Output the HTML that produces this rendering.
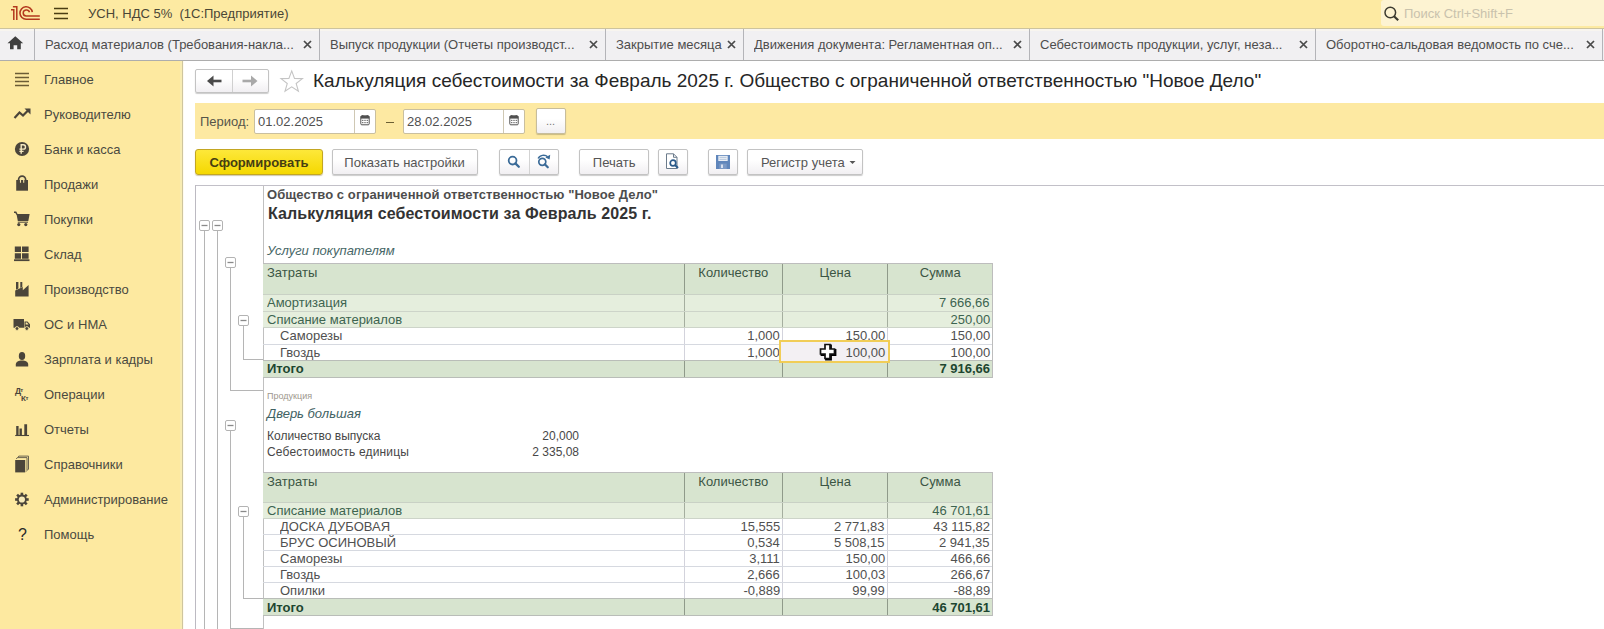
<!DOCTYPE html>
<html><head><meta charset="utf-8"><style>
*{box-sizing:border-box;margin:0;padding:0}
html,body{width:1604px;height:629px;overflow:hidden;background:#fff;font-family:"Liberation Sans",sans-serif;color:#333}
.a{position:absolute;white-space:nowrap}
.n{font-size:13.5px!important;transform:scaleX(.963);transform-origin:0 0}
.nr{font-size:13.5px!important;transform:scaleX(.963);transform-origin:100% 0}
.nc{display:inline-block;font-size:13.5px!important;transform:scaleX(.963);transform-origin:50% 0}
.nl{display:inline-block;font-size:13.5px!important;transform:scaleX(.963);transform-origin:0 0}
.tab{position:absolute;top:28px;height:32px;font-size:13px;color:#4d4d4d;line-height:32px}
.tsep{position:absolute;top:29px;width:1px;height:31px;background:#b4b4b8}
.tx{position:absolute;top:28px;height:32px}
.si{position:absolute;left:44px;font-size:13px;color:#4a4a40;line-height:16px}
.btn{position:absolute;border:1px solid #c3c3c3;border-radius:2px;background:linear-gradient(#ffffff 40%,#f1eff2);box-shadow:0 1px 1px rgba(0,0,0,.20);font-size:13px;color:#555;text-align:center}
.inp{position:absolute;border:1px solid #c1c1c1;border-radius:2px;background:#fff;font-size:13px;color:#484848}
</style></head><body>
<div class="a" style="left:0;top:0;width:1604px;height:28px;background:#fdeaa2"></div>
<div class="a" style="left:0;top:28px;width:1604px;height:1px;background:#cdc49e"></div>
<svg class="a" style="left:0;top:0" width="50" height="28" viewBox="0 0 50 28">
<g fill="none" stroke="#b3391e" stroke-width="1.5">
<path d="M11 9.7 H13.8 V19.9 M12.9 6.75 H16.8 V19.9"/>
<path d="M32.3 12.2 A6.2 6.2 0 1 0 26.2 19.2 H39.8" stroke-width="1.6"/>
<path d="M29.5 12.2 A3.2 3.1 0 1 0 26.2 16.1 H39.8" stroke-width="1.5"/>
</g></svg>
<svg class="a" style="left:53px;top:6px" width="17" height="15" viewBox="0 0 17 15">
<g stroke="#4a3d12" stroke-width="1.4"><path d="M1 2.5H15M1 7.5H15M1 12.5H15"/></g></svg>
<div class="a n" style="left:88px;top:6px;font-size:13px;line-height:15px;color:#4a4636;white-space:pre">УСН, НДС 5%  (1С:Предприятие)</div>
<div class="a" style="left:1381px;top:0;width:223px;height:26px;background:#fdf3d2;border-radius:3px 0 0 3px"></div>
<svg class="a" style="left:1383px;top:6px" width="18" height="16" viewBox="0 0 18 16">
<circle cx="7.3" cy="6.5" r="5.3" fill="none" stroke="#3c3a30" stroke-width="1.5"/><path d="M11 10.2 L15.2 14.2" stroke="#3c3a30" stroke-width="2.2"/></svg>
<div class="a n" style="left:1404px;top:6px;font-size:13px;line-height:15px;color:#c9c2ad">Поиск Ctrl+Shift+F</div>
<div class="a" style="left:0;top:29px;width:1604px;height:31px;background:#f1f0f2"></div>
<div class="a" style="left:0;top:29px;width:1604px;height:2px;background:#f8f5ef"></div>
<div class="a" style="left:0;top:60px;width:1604px;height:1px;background:#adadad"></div>
<svg class="a" style="left:7px;top:36px" width="17" height="14" viewBox="0 0 17 14">
<path d="M8.3 0.3 L16.2 7.3 H13.8 V13.3 H10.2 V9.2 H6.6 V13.3 H3 V7.3 H0.5 Z" fill="#3f3f3f"/></svg>
<div class="tsep" style="left:34px"></div>
<div class="tsep" style="left:319px"></div>
<div class="tsep" style="left:605px"></div>
<div class="tsep" style="left:743px"></div>
<div class="tsep" style="left:1029px"></div>
<div class="tsep" style="left:1315px"></div>
<div class="tsep" style="left:1602px"></div>
<div class="tab n" style="left:45px;top:29px">Расход материалов (Требования-накла...</div>
<svg class="a" style="left:303px;top:40px" width="9" height="9" viewBox="0 0 9 9"><path d="M1 1 L8 8 M8 1 L1 8" stroke="#4a4a4a" stroke-width="1.75"/></svg>
<div class="tab n" style="left:330px;top:29px">Выпуск продукции (Отчеты производст...</div>
<svg class="a" style="left:589px;top:40px" width="9" height="9" viewBox="0 0 9 9"><path d="M1 1 L8 8 M8 1 L1 8" stroke="#4a4a4a" stroke-width="1.75"/></svg>
<div class="tab n" style="left:616px;top:29px">Закрытие месяца</div>
<svg class="a" style="left:727px;top:40px" width="9" height="9" viewBox="0 0 9 9"><path d="M1 1 L8 8 M8 1 L1 8" stroke="#4a4a4a" stroke-width="1.75"/></svg>
<div class="tab n" style="left:754px;top:29px">Движения документа: Регламентная оп...</div>
<svg class="a" style="left:1013px;top:40px" width="9" height="9" viewBox="0 0 9 9"><path d="M1 1 L8 8 M8 1 L1 8" stroke="#4a4a4a" stroke-width="1.75"/></svg>
<div class="tab n" style="left:1040px;top:29px">Себестоимость продукции, услуг, неза...</div>
<svg class="a" style="left:1299px;top:40px" width="9" height="9" viewBox="0 0 9 9"><path d="M1 1 L8 8 M8 1 L1 8" stroke="#4a4a4a" stroke-width="1.75"/></svg>
<div class="tab n" style="left:1326px;top:29px">Оборотно-сальдовая ведомость по сче...</div>
<svg class="a" style="left:1586px;top:40px" width="9" height="9" viewBox="0 0 9 9"><path d="M1 1 L8 8 M8 1 L1 8" stroke="#4a4a4a" stroke-width="1.75"/></svg>
<div class="a" style="left:0;top:61px;width:180px;height:568px;background:#fde9a0"></div>
<div class="a" style="left:180px;top:61px;width:2px;height:568px;background:#f8ecb2"></div>
<div class="a" style="left:182px;top:61px;width:1px;height:568px;background:#cec59f"></div>
<div class="a" style="left:183px;top:61px;width:1px;height:568px;background:#fffbee"></div>
<div class="si n" style="top:71.5px">Главное</div>
<div class="si n" style="top:106.5px">Руководителю</div>
<div class="si n" style="top:141.5px">Банк и касса</div>
<div class="si n" style="top:176.5px">Продажи</div>
<div class="si n" style="top:211.5px">Покупки</div>
<div class="si n" style="top:246.5px">Склад</div>
<div class="si n" style="top:281.5px">Производство</div>
<div class="si n" style="top:316.5px">ОС и НМА</div>
<div class="si n" style="top:351.5px">Зарплата и кадры</div>
<div class="si n" style="top:386.5px">Операции</div>
<div class="si n" style="top:421.5px">Отчеты</div>
<div class="si n" style="top:456.5px">Справочники</div>
<div class="si n" style="top:491.5px">Администрирование</div>
<div class="si n" style="top:526.5px">Помощь</div>
<svg class="a" style="left:14px;top:72px" width="16" height="15"><g stroke="#6b5c35" stroke-width="1.3"><path d="M1 1.5H15M1 5.5H15M1 9.5H15M1 13.5H15"/></g></svg>
<svg class="a" style="left:13px;top:107px" width="19" height="13" viewBox="0 0 19 13"><path d="M1.5 11 L6.5 5.5 L10 8.5 L16 2.5" fill="none" stroke="#4b453a" stroke-width="2.2"/><path d="M11.5 1.5 H17.5 V7.5 Z" fill="#4b453a"/></svg>
<svg class="a" style="left:14px;top:141px" width="16" height="16" viewBox="0 0 16 16"><circle cx="8" cy="8" r="7.1" fill="#4b453a"/><path d="M7.2 12.8 V3.7 H9.3 A2.2 2.2 0 0 1 9.3 8.1 H5.4 M5.4 10.4 H9.6" fill="none" stroke="#f6e9c0" stroke-width="1.4"/></svg>
<svg class="a" style="left:15px;top:175px" width="14" height="17" viewBox="0 0 14 17"><path d="M1.2 5 H13 V15.7 H1.2 Z" fill="#4b453a"/><path d="M3.6 8 V4.6 A3.5 3.5 0 0 1 10.6 4.6 V8" fill="none" stroke="#4b453a" stroke-width="1.7"/><path d="M5.5 7.8 V5 A1.6 1.6 0 0 1 8.7 5 V7.8" fill="none" stroke="#f3e3a6" stroke-width="1.1"/></svg>
<svg class="a" style="left:13px;top:211px" width="18" height="16" viewBox="0 0 18 16"><path d="M1 1.2 H2.8 L4 3.5" fill="none" stroke="#4b453a" stroke-width="1.5"/><path d="M3.5 3 H16.6 L15.3 10 H4.8 Z" fill="#4b453a"/><path d="M4.8 11.2 H15" stroke="#4b453a" stroke-width="1"/><circle cx="5.8" cy="13.6" r="1.6" fill="#4b453a"/><circle cx="12.8" cy="13.6" r="1.6" fill="#4b453a"/></svg>
<svg class="a" style="left:14px;top:246px" width="16" height="16" viewBox="0 0 16 16"><path d="M0.8 0.5 H7 V6 H0.8 Z M8 0.5 H14.6 V6 H8 Z M0.8 7.3 H7 V12.8 H0.8 Z M8 7.3 H14.6 V12.8 H8 Z" fill="#4b453a"/><path d="M0 14.2 H15.5" stroke="#4b453a" stroke-width="1.8"/></svg>
<svg class="a" style="left:15px;top:282px" width="15" height="15" viewBox="0 0 15 15"><path d="M0.2 14.5 V8.5 L7.8 5 V8.3 L13.6 3 V14.5 Z" fill="#4b453a"/><path d="M1 0 H3.4 V6.6 L1 7.7 Z M5.3 0 H7.3 V5 L5.3 5.9 Z" fill="#4b453a"/></svg>
<svg class="a" style="left:13px;top:318px" width="18" height="13" viewBox="0 0 18 13"><path d="M0.5 1 H11 V9.8 H0.5 Z M11.5 3.5 H14.5 L17 6.3 V9.8 H11.5 Z" fill="#4b453a"/><path d="M12.6 4.5 H14 L15.6 6.4 H12.6 Z" fill="#fde9a2"/><circle cx="4" cy="10.5" r="1.9" fill="#4b453a" stroke="#fde9a2" stroke-width="0.9"/><circle cx="13.8" cy="10.5" r="1.9" fill="#4b453a" stroke="#fde9a2" stroke-width="0.9"/></svg>
<svg class="a" style="left:15px;top:352px" width="14" height="15" viewBox="0 0 14 15"><ellipse cx="7" cy="4" rx="3.2" ry="3.9" fill="#4b453a"/><path d="M0.8 14.5 V12.6 C0.8 9.8 3.6 8.6 7 8.6 C10.4 8.6 13.2 9.8 13.2 12.6 V14.5 Z" fill="#4b453a"/></svg>
<svg class="a" style="left:14px;top:386px" width="17" height="17" viewBox="0 0 17 17"><g font-family="Liberation Sans" font-weight="bold" fill="#4b453a"><text x="1" y="8" font-size="8.5">Д</text><text x="6.3" y="5.6" font-size="6">т</text><text x="7" y="15.3" font-size="8">К</text><text x="11.6" y="13.6" font-size="6">т</text></g></svg>
<svg class="a" style="left:14px;top:422px" width="16" height="15" viewBox="0 0 16 15"><path d="M2.2 4 H4.6 V13 H2.2 Z M5.5 6.6 H7.9 V13 H5.5 Z M10.3 2.3 H13.1 V13 H10.3 Z" fill="#4b453a"/><path d="M1.2 13.5 H15" stroke="#4b453a" stroke-width="1.1"/></svg>
<svg class="a" style="left:14px;top:455px" width="16" height="18" viewBox="0 0 16 18"><path d="M1.2 5 H11.2 V17.4 H1.2 Z" fill="#4b453a"/><path d="M2.3 4 L3.3 2.6 H13 V15.5 L12.2 16.5 M3.8 2.4 L4.8 1.1 H14.5 V14 L13.7 15" fill="none" stroke="#6b6450" stroke-width="1"/></svg>
<svg class="a" style="left:14px;top:492px" width="16" height="16" viewBox="0 0 16 16"><g transform="translate(7.9 7.5)"><g fill="#4b453a"><rect x="-1.3" y="-6.8" width="2.6" height="13.6"/><rect x="-1.3" y="-6.8" width="2.6" height="13.6" transform="rotate(45)"/><rect x="-1.3" y="-6.8" width="2.6" height="13.6" transform="rotate(90)"/><rect x="-1.3" y="-6.8" width="2.6" height="13.6" transform="rotate(135)"/></g><circle r="4.9" fill="#4b453a"/><circle r="3.1" fill="#f5e9b8"/></g></svg>
<div class="a" style="left:18px;top:526px;font-size:16px;color:#2a2a2a;line-height:17px">?</div>
<div class="btn" style="left:195px;top:69px;width:74px;height:24px"></div>
<div class="a" style="left:232px;top:70px;width:1px;height:22px;background:#d0d0d0"></div>
<svg class="a" style="left:206px;top:74px" width="18" height="14" viewBox="0 0 18 14"><path d="M15.5 7 H5" stroke="#4a4a4a" stroke-width="2.6"/><path d="M1 7 L7.5 1.5 V12.5 Z" fill="#4a4a4a"/></svg>
<svg class="a" style="left:241px;top:74px" width="18" height="14" viewBox="0 0 18 14"><path d="M1.5 7 H12" stroke="#a9a9a9" stroke-width="2.6"/><path d="M16.5 7 L10 1.5 V12.5 Z" fill="#a9a9a9"/></svg>
<svg class="a" style="left:279px;top:69px" width="26" height="25" viewBox="-0.4 -0.5 27 26"><path d="M12.8 1.5 L15.7 9.3 L24 9.5 L17.4 14.6 L19.8 22.7 L12.8 18 L5.8 22.7 L8.2 14.6 L1.6 9.5 L9.9 9.3 Z" fill="none" stroke="#c4c4c4" stroke-width="1.1"/></svg>
<div class="a" style="left:313px;top:70px;font-size:19px;line-height:22px;color:#262626">Калькуляция себестоимости за Февраль 2025 г. Общество с ограниченной ответственностью "Новое Дело"</div>
<div class="a" style="left:195px;top:103px;width:1409px;height:36px;background:#fde9a2"></div>
<div class="a n" style="left:200px;top:114px;font-size:13px;line-height:15px;color:#55554a">Период:</div>
<div class="inp" style="left:254px;top:109px;width:122px;height:25px;border-color:#c9bf9f"></div>
<div class="a" style="left:354px;top:110px;width:1px;height:23px;background:#cfc8b4"></div>
<div class="a n" style="left:258px;top:114px;font-size:13px;line-height:15px;color:#505050">01.02.2025</div>
<svg class="a" style="left:360px;top:114px" width="10" height="12" viewBox="0 0 10 12"><rect x="0.8" y="1.8" width="8.4" height="9" rx="1" fill="#fff" stroke="#505050" stroke-width="1"/><path d="M0.8 2 H9.2 V4.6 H0.8 Z" fill="#505050"/><path d="M2.8 1 V2.6 M7.2 1 V2.6" stroke="#505050" stroke-width="1"/><g fill="#777"><rect x="2" y="5.8" width="1.4" height="1.2"/><rect x="4.3" y="5.8" width="1.4" height="1.2"/><rect x="6.6" y="5.8" width="1.4" height="1.2"/><rect x="2" y="8" width="1.4" height="1.2"/><rect x="4.3" y="8" width="1.4" height="1.2"/><rect x="6.6" y="8" width="1.4" height="1.2"/></g></svg>
<div class="inp" style="left:403px;top:109px;width:122px;height:25px;border-color:#c9bf9f"></div>
<div class="a" style="left:503px;top:110px;width:1px;height:23px;background:#cfc8b4"></div>
<div class="a n" style="left:407px;top:114px;font-size:13px;line-height:15px;color:#505050">28.02.2025</div>
<svg class="a" style="left:509px;top:114px" width="10" height="12" viewBox="0 0 10 12"><rect x="0.8" y="1.8" width="8.4" height="9" rx="1" fill="#fff" stroke="#505050" stroke-width="1"/><path d="M0.8 2 H9.2 V4.6 H0.8 Z" fill="#505050"/><path d="M2.8 1 V2.6 M7.2 1 V2.6" stroke="#505050" stroke-width="1"/><g fill="#777"><rect x="2" y="5.8" width="1.4" height="1.2"/><rect x="4.3" y="5.8" width="1.4" height="1.2"/><rect x="6.6" y="5.8" width="1.4" height="1.2"/><rect x="2" y="8" width="1.4" height="1.2"/><rect x="4.3" y="8" width="1.4" height="1.2"/><rect x="6.6" y="8" width="1.4" height="1.2"/></g></svg>
<div class="a" style="left:386px;top:122px;width:8px;height:1px;background:#6b5f33"></div>
<div class="btn" style="left:536px;top:108px;width:30px;height:26px;line-height:24px;color:#777;font-size:11px;border-color:#c7bd9c;padding-right:1px">...</div>
<div class="a" style="left:195px;top:149px;width:128px;height:26px;border:1px solid #c3a622;border-radius:3px;background:linear-gradient(#fde83a,#f5d800);box-shadow:0 1px 1px rgba(120,100,20,.35);font-size:13px;font-weight:bold;color:#463d12;text-align:center;line-height:26px">Сформировать</div>
<div class="btn" style="left:332px;top:149px;width:146px;height:26px;line-height:26px"><span class="nc">Показать настройки</span></div>
<div class="btn" style="left:499px;top:149px;width:60px;height:26px"></div>
<div class="a" style="left:529px;top:150px;width:1px;height:24px;background:#d3d3d3"></div>
<svg class="a" style="left:506px;top:154px" width="16" height="16" viewBox="0 0 16 16"><circle cx="6.6" cy="6.6" r="3.9" fill="none" stroke="#3b6b98" stroke-width="1.8"/><path d="M9.4 9.4 L12.8 12.8" stroke="#3b6b98" stroke-width="2.3" stroke-linecap="round"/></svg>
<svg class="a" style="left:536px;top:153px" width="17" height="17" viewBox="0 0 17 17"><circle cx="6.3" cy="8.8" r="3.5" fill="none" stroke="#3b6b98" stroke-width="1.7"/><path d="M8.8 11.3 L11.8 14.3" stroke="#3b6b98" stroke-width="2.2" stroke-linecap="round"/><path d="M2.2 5.6 C3.5 2 9 1.2 11.6 3.8" fill="none" stroke="#3b6b98" stroke-width="1.5"/><path d="M14.2 1.8 L13.6 6.6 L9.4 4.6 Z" fill="#3b6b98"/></svg>
<div class="btn" style="left:579px;top:149px;width:70px;height:26px;line-height:26px"><span class="nc">Печать</span></div>
<div class="btn" style="left:658px;top:149px;width:30px;height:26px"></div>
<svg class="a" style="left:665px;top:153px" width="16" height="17" viewBox="0 0 16 17"><path d="M1.5 0.8 H8.5 L12 4.3 V15.5 H1.5 Z" fill="#fff" stroke="#6b7b8b" stroke-width="1"/><path d="M8.5 0.8 V4.3 H12" fill="none" stroke="#6b7b8b" stroke-width="1"/><circle cx="8" cy="10" r="2.8" fill="none" stroke="#2a5a8a" stroke-width="1.7"/><path d="M10 12 L13 15" stroke="#2a5a8a" stroke-width="2"/></svg>
<div class="btn" style="left:708px;top:149px;width:30px;height:26px"></div>
<svg class="a" style="left:715px;top:154px" width="16" height="16" viewBox="0 0 16 16"><path d="M1 1 H15 V15 H1 Z" fill="#5f86bb"/><path d="M3.3 1.8 H12.7 V7 H3.3 Z" fill="#e9eef5"/><path d="M4.5 3.4 H11.5 M4.5 5.4 H11.5" stroke="#a9bcd6" stroke-width="0.8"/><path d="M4.3 9.6 H11.7 V15 H4.3 Z" fill="#7b9ac6"/><path d="M6 10.6 H8 V14 H6 Z" fill="#d7e0ee"/></svg>
<div class="btn" style="left:747px;top:149px;width:116px;height:26px;line-height:26px;text-align:left;padding-left:13px"><span class="nl">Регистр учета</span></div>
<svg class="a" style="left:849px;top:160px" width="7" height="5" viewBox="0 0 7 5"><path d="M0.5 1 H6.5 L3.5 4 Z" fill="#555"/></svg>
<div class="a" style="left:195px;top:185px;width:1409px;height:1px;background:#c2c0c8"></div>
<div class="a" style="left:195px;top:185px;width:1px;height:444px;background:#bcbac2"></div>
<div class="a" style="left:263px;top:186px;width:1px;height:443px;background:#c0c0c0"></div>
<div class="a" style="left:267px;top:187px;font-size:13px;line-height:15px;font-weight:bold;color:#4d4d4d;letter-spacing:0.08px">Общество с ограниченной ответственностью "Новое Дело"</div>
<div class="a" style="left:268px;top:205px;font-size:16px;line-height:18px;font-weight:bold;color:#333;letter-spacing:0.1px">Калькуляция себестоимости за Февраль 2025 г.</div>
<div class="a" style="left:267px;top:243px;font-size:13px;line-height:15px;font-style:italic;color:#476767">Услуги покупателям</div>
<div class="a" style="left:263px;top:263px;width:729px;height:31px;background:#d7e4cf"></div>
<div class="a n" style="left:267px;top:265px;font-size:13px;line-height:15px;color:#3b5544">Затраты</div>
<div class="a" style="left:633px;width:200px;text-align:center;top:265px;font-size:13px;line-height:15px;color:#3b5544"><span class="nc">Количество</span></div>
<div class="a" style="left:735px;width:200px;text-align:center;top:265px;font-size:13px;line-height:15px;color:#3b5544"><span class="nc">Цена</span></div>
<div class="a" style="left:840px;width:200px;text-align:center;top:265px;font-size:13px;line-height:15px;color:#3b5544"><span class="nc">Сумма</span></div>
<div class="a" style="left:263px;top:294px;width:729px;height:17px;background:#e5eedd"></div>
<div class="a n" style="left:267px;top:295px;font-size:13px;line-height:15px;color:#3d6450">Амортизация</div>
<div class="a nr" style="right:614px;top:295px;font-size:13px;line-height:15px;color:#3d6450">7 666,66</div>
<div class="a" style="left:263px;top:311px;width:729px;height:16px;background:#e5eedd"></div>
<div class="a n" style="left:267px;top:312px;font-size:13px;line-height:15px;color:#3d6450">Списание материалов</div>
<div class="a nr" style="right:614px;top:312px;font-size:13px;line-height:15px;color:#3d6450">250,00</div>
<div class="a n" style="left:280px;top:328px;font-size:13px;line-height:15px;color:#505050">Саморезы</div>
<div class="a nr" style="right:824px;top:328px;font-size:13px;line-height:15px;color:#505050">1,000</div>
<div class="a nr" style="right:719px;top:328px;font-size:13px;line-height:15px;color:#505050">150,00</div>
<div class="a nr" style="right:614px;top:328px;font-size:13px;line-height:15px;color:#505050">150,00</div>
<div class="a n" style="left:280px;top:345px;font-size:13px;line-height:15px;color:#505050">Гвоздь</div>
<div class="a nr" style="right:824px;top:345px;font-size:13px;line-height:15px;color:#505050">1,000</div>
<div class="a nr" style="right:719px;top:345px;font-size:13px;line-height:15px;color:#505050">100,00</div>
<div class="a nr" style="right:614px;top:345px;font-size:13px;line-height:15px;color:#505050">100,00</div>
<div class="a" style="left:263px;top:360px;width:729px;height:17px;background:#d7e4cf"></div>
<div class="a" style="left:267px;top:361px;font-size:13px;line-height:15px;font-weight:bold;color:#1d4630">Итого</div>
<div class="a" style="right:614px;top:361px;font-size:13px;line-height:15px;font-weight:bold;color:#1d4630">7 916,66</div>
<div class="a" style="left:684px;top:294px;width:1px;height:17px;background:#a5ae9f"></div>
<div class="a" style="left:782px;top:294px;width:1px;height:17px;background:#a5ae9f"></div>
<div class="a" style="left:887px;top:294px;width:1px;height:17px;background:#a5ae9f"></div>
<div class="a" style="left:684px;top:311px;width:1px;height:16px;background:#a5ae9f"></div>
<div class="a" style="left:782px;top:311px;width:1px;height:16px;background:#a5ae9f"></div>
<div class="a" style="left:887px;top:311px;width:1px;height:16px;background:#a5ae9f"></div>
<div class="a" style="left:684px;top:327px;width:1px;height:17px;background:#d3d3dc"></div>
<div class="a" style="left:782px;top:327px;width:1px;height:17px;background:#d3d3dc"></div>
<div class="a" style="left:887px;top:327px;width:1px;height:17px;background:#d3d3dc"></div>
<div class="a" style="left:684px;top:344px;width:1px;height:16px;background:#d3d3dc"></div>
<div class="a" style="left:782px;top:344px;width:1px;height:16px;background:#d3d3dc"></div>
<div class="a" style="left:887px;top:344px;width:1px;height:16px;background:#d3d3dc"></div>
<div class="a" style="left:684px;top:360px;width:1px;height:17px;background:#8f9a8a"></div>
<div class="a" style="left:782px;top:360px;width:1px;height:17px;background:#8f9a8a"></div>
<div class="a" style="left:887px;top:360px;width:1px;height:17px;background:#8f9a8a"></div>
<div class="a" style="left:684px;top:263px;width:1px;height:31px;background:#8f9a8a"></div>
<div class="a" style="left:782px;top:263px;width:1px;height:31px;background:#8f9a8a"></div>
<div class="a" style="left:887px;top:263px;width:1px;height:31px;background:#8f9a8a"></div>
<div class="a" style="left:263px;top:263px;width:730px;height:1px;background:#bdbdbd"></div>
<div class="a" style="left:263px;top:294px;width:730px;height:1px;background:#c9d1c5"></div>
<div class="a" style="left:263px;top:311px;width:730px;height:1px;background:#cdd4c9"></div>
<div class="a" style="left:263px;top:327px;width:730px;height:1px;background:#cdd4c9"></div>
<div class="a" style="left:263px;top:344px;width:730px;height:1px;background:#d6d9e0"></div>
<div class="a" style="left:263px;top:360px;width:730px;height:1px;background:#b9bdb8"></div>
<div class="a" style="left:263px;top:377px;width:730px;height:1px;background:#b9bdb8"></div>
<div class="a" style="left:992px;top:263px;width:1px;height:115px;background:#bdbdbd"></div>
<div class="a" style="left:267px;top:391px;font-size:9px;line-height:11px;color:#9d978d">Продукция</div>
<div class="a" style="left:267px;top:406px;font-size:13px;line-height:15px;font-style:italic;color:#416263">Дверь большая</div>
<div class="a" style="left:267px;top:429px;font-size:12px;line-height:14px;color:#474747">Количество выпуска</div>
<div class="a" style="right:1025px;top:429px;font-size:12px;line-height:14px;color:#474747">20,000</div>
<div class="a" style="left:267px;top:445px;font-size:12px;line-height:14px;color:#474747;letter-spacing:0.18px">Себестоимость единицы</div>
<div class="a" style="right:1025px;top:445px;font-size:12px;line-height:14px;color:#474747">2 335,08</div>
<div class="a" style="left:263px;top:472px;width:729px;height:30px;background:#d7e4cf"></div>
<div class="a n" style="left:267px;top:474px;font-size:13px;line-height:15px;color:#3b5544">Затраты</div>
<div class="a" style="left:633px;width:200px;text-align:center;top:474px;font-size:13px;line-height:15px;color:#3b5544"><span class="nc">Количество</span></div>
<div class="a" style="left:735px;width:200px;text-align:center;top:474px;font-size:13px;line-height:15px;color:#3b5544"><span class="nc">Цена</span></div>
<div class="a" style="left:840px;width:200px;text-align:center;top:474px;font-size:13px;line-height:15px;color:#3b5544"><span class="nc">Сумма</span></div>
<div class="a" style="left:263px;top:502px;width:729px;height:16px;background:#e5eedd"></div>
<div class="a n" style="left:267px;top:503px;font-size:13px;line-height:15px;color:#3d6450">Списание материалов</div>
<div class="a nr" style="right:614px;top:503px;font-size:13px;line-height:15px;color:#3d6450">46 701,61</div>
<div class="a n" style="left:280px;top:519px;font-size:13px;line-height:15px;color:#505050">ДОСКА ДУБОВАЯ</div>
<div class="a nr" style="right:824px;top:519px;font-size:13px;line-height:15px;color:#505050">15,555</div>
<div class="a nr" style="right:719px;top:519px;font-size:13px;line-height:15px;color:#505050">2 771,83</div>
<div class="a nr" style="right:614px;top:519px;font-size:13px;line-height:15px;color:#505050">43 115,82</div>
<div class="a n" style="left:280px;top:535px;font-size:13px;line-height:15px;color:#505050">БРУС ОСИНОВЫЙ</div>
<div class="a nr" style="right:824px;top:535px;font-size:13px;line-height:15px;color:#505050">0,534</div>
<div class="a nr" style="right:719px;top:535px;font-size:13px;line-height:15px;color:#505050">5 508,15</div>
<div class="a nr" style="right:614px;top:535px;font-size:13px;line-height:15px;color:#505050">2 941,35</div>
<div class="a n" style="left:280px;top:551px;font-size:13px;line-height:15px;color:#505050">Саморезы</div>
<div class="a nr" style="right:824px;top:551px;font-size:13px;line-height:15px;color:#505050">3,111</div>
<div class="a nr" style="right:719px;top:551px;font-size:13px;line-height:15px;color:#505050">150,00</div>
<div class="a nr" style="right:614px;top:551px;font-size:13px;line-height:15px;color:#505050">466,66</div>
<div class="a n" style="left:280px;top:567px;font-size:13px;line-height:15px;color:#505050">Гвоздь</div>
<div class="a nr" style="right:824px;top:567px;font-size:13px;line-height:15px;color:#505050">2,666</div>
<div class="a nr" style="right:719px;top:567px;font-size:13px;line-height:15px;color:#505050">100,03</div>
<div class="a nr" style="right:614px;top:567px;font-size:13px;line-height:15px;color:#505050">266,67</div>
<div class="a n" style="left:280px;top:583px;font-size:13px;line-height:15px;color:#505050">Опилки</div>
<div class="a nr" style="right:824px;top:583px;font-size:13px;line-height:15px;color:#505050">-0,889</div>
<div class="a nr" style="right:719px;top:583px;font-size:13px;line-height:15px;color:#505050">99,99</div>
<div class="a nr" style="right:614px;top:583px;font-size:13px;line-height:15px;color:#505050">-88,89</div>
<div class="a" style="left:263px;top:598px;width:729px;height:17px;background:#d7e4cf"></div>
<div class="a" style="left:267px;top:600px;font-size:13px;line-height:15px;font-weight:bold;color:#1d4630">Итого</div>
<div class="a" style="right:614px;top:600px;font-size:13px;line-height:15px;font-weight:bold;color:#1d4630">46 701,61</div>
<div class="a" style="left:684px;top:502px;width:1px;height:16px;background:#a5ae9f"></div>
<div class="a" style="left:782px;top:502px;width:1px;height:16px;background:#a5ae9f"></div>
<div class="a" style="left:887px;top:502px;width:1px;height:16px;background:#a5ae9f"></div>
<div class="a" style="left:684px;top:518px;width:1px;height:16px;background:#d3d3dc"></div>
<div class="a" style="left:782px;top:518px;width:1px;height:16px;background:#d3d3dc"></div>
<div class="a" style="left:887px;top:518px;width:1px;height:16px;background:#d3d3dc"></div>
<div class="a" style="left:684px;top:534px;width:1px;height:16px;background:#d3d3dc"></div>
<div class="a" style="left:782px;top:534px;width:1px;height:16px;background:#d3d3dc"></div>
<div class="a" style="left:887px;top:534px;width:1px;height:16px;background:#d3d3dc"></div>
<div class="a" style="left:684px;top:550px;width:1px;height:16px;background:#d3d3dc"></div>
<div class="a" style="left:782px;top:550px;width:1px;height:16px;background:#d3d3dc"></div>
<div class="a" style="left:887px;top:550px;width:1px;height:16px;background:#d3d3dc"></div>
<div class="a" style="left:684px;top:566px;width:1px;height:16px;background:#d3d3dc"></div>
<div class="a" style="left:782px;top:566px;width:1px;height:16px;background:#d3d3dc"></div>
<div class="a" style="left:887px;top:566px;width:1px;height:16px;background:#d3d3dc"></div>
<div class="a" style="left:684px;top:582px;width:1px;height:16px;background:#d3d3dc"></div>
<div class="a" style="left:782px;top:582px;width:1px;height:16px;background:#d3d3dc"></div>
<div class="a" style="left:887px;top:582px;width:1px;height:16px;background:#d3d3dc"></div>
<div class="a" style="left:684px;top:598px;width:1px;height:17px;background:#8f9a8a"></div>
<div class="a" style="left:782px;top:598px;width:1px;height:17px;background:#8f9a8a"></div>
<div class="a" style="left:887px;top:598px;width:1px;height:17px;background:#8f9a8a"></div>
<div class="a" style="left:684px;top:472px;width:1px;height:30px;background:#8f9a8a"></div>
<div class="a" style="left:782px;top:472px;width:1px;height:30px;background:#8f9a8a"></div>
<div class="a" style="left:887px;top:472px;width:1px;height:30px;background:#8f9a8a"></div>
<div class="a" style="left:263px;top:472px;width:730px;height:1px;background:#bdbdbd"></div>
<div class="a" style="left:263px;top:502px;width:730px;height:1px;background:#c9d1c5"></div>
<div class="a" style="left:263px;top:518px;width:730px;height:1px;background:#cdd4c9"></div>
<div class="a" style="left:263px;top:534px;width:730px;height:1px;background:#d6d9e0"></div>
<div class="a" style="left:263px;top:550px;width:730px;height:1px;background:#d6d9e0"></div>
<div class="a" style="left:263px;top:566px;width:730px;height:1px;background:#d6d9e0"></div>
<div class="a" style="left:263px;top:582px;width:730px;height:1px;background:#d6d9e0"></div>
<div class="a" style="left:263px;top:598px;width:730px;height:1px;background:#b9bdb8"></div>
<div class="a" style="left:263px;top:615px;width:730px;height:1px;background:#b9bdb8"></div>
<div class="a" style="left:992px;top:472px;width:1px;height:144px;background:#bdbdbd"></div>
<div class="a" style="left:204px;top:231px;width:1px;height:398px;background:#b5b5b5"></div>
<div class="a" style="left:217px;top:231px;width:1px;height:398px;background:#b5b5b5"></div>
<div class="a" style="left:230px;top:267px;width:1px;height:123px;background:#b5b5b5"></div>
<div class="a" style="left:230px;top:390px;width:33px;height:1px;background:#b5b5b5"></div>
<div class="a" style="left:243px;top:325px;width:1px;height:34px;background:#b5b5b5"></div>
<div class="a" style="left:243px;top:359px;width:20px;height:1px;background:#b5b5b5"></div>
<div class="a" style="left:230px;top:430px;width:1px;height:199px;background:#b5b5b5"></div>
<div class="a" style="left:230px;top:628px;width:33px;height:1px;background:#b5b5b5"></div>
<div class="a" style="left:243px;top:516px;width:1px;height:82px;background:#b5b5b5"></div>
<div class="a" style="left:243px;top:598px;width:20px;height:1px;background:#b5b5b5"></div>
<div class="a" style="left:779px;top:340px;width:111px;height:23px;border:2px solid #f1cd57;background:#f3f0f3"></div>
<div class="a nr" style="right:719px;top:345px;font-size:13px;line-height:15px;color:#505050">100,00</div>
<svg class="a" style="left:199px;top:220px" width="11" height="11" viewBox="0 0 11 11"><rect x="0.5" y="0.5" width="10" height="10" rx="1.5" fill="#fff" stroke="#b3b3b3"/><path d="M2.5 5.5 H8.5" stroke="#8a8a8a" stroke-width="1.3"/></svg>
<svg class="a" style="left:212px;top:220px" width="11" height="11" viewBox="0 0 11 11"><rect x="0.5" y="0.5" width="10" height="10" rx="1.5" fill="#fff" stroke="#b3b3b3"/><path d="M2.5 5.5 H8.5" stroke="#8a8a8a" stroke-width="1.3"/></svg>
<svg class="a" style="left:225px;top:257px" width="11" height="11" viewBox="0 0 11 11"><rect x="0.5" y="0.5" width="10" height="10" rx="1.5" fill="#fff" stroke="#b3b3b3"/><path d="M2.5 5.5 H8.5" stroke="#8a8a8a" stroke-width="1.3"/></svg>
<svg class="a" style="left:238px;top:315px" width="11" height="11" viewBox="0 0 11 11"><rect x="0.5" y="0.5" width="10" height="10" rx="1.5" fill="#fff" stroke="#b3b3b3"/><path d="M2.5 5.5 H8.5" stroke="#8a8a8a" stroke-width="1.3"/></svg>
<svg class="a" style="left:225px;top:420px" width="11" height="11" viewBox="0 0 11 11"><rect x="0.5" y="0.5" width="10" height="10" rx="1.5" fill="#fff" stroke="#b3b3b3"/><path d="M2.5 5.5 H8.5" stroke="#8a8a8a" stroke-width="1.3"/></svg>
<svg class="a" style="left:238px;top:506px" width="11" height="11" viewBox="0 0 11 11"><rect x="0.5" y="0.5" width="10" height="10" rx="1.5" fill="#fff" stroke="#b3b3b3"/><path d="M2.5 5.5 H8.5" stroke="#8a8a8a" stroke-width="1.3"/></svg>
<svg class="a" style="left:819px;top:343px" width="20" height="20" viewBox="0 0 20 20"><path d="M7 2.5 H12 V7 H16.5 V12 H12 V16.5 H7 V12 H2.5 V7 H7 Z" fill="#000" stroke="#000" stroke-width="1.8"/><path d="M6 1.5 H11 V6 H15.5 V11 H11 V15.5 H6 V11 H1.5 V6 H6 Z" fill="#fff" stroke="#111" stroke-width="1.7"/></svg>
</body></html>
